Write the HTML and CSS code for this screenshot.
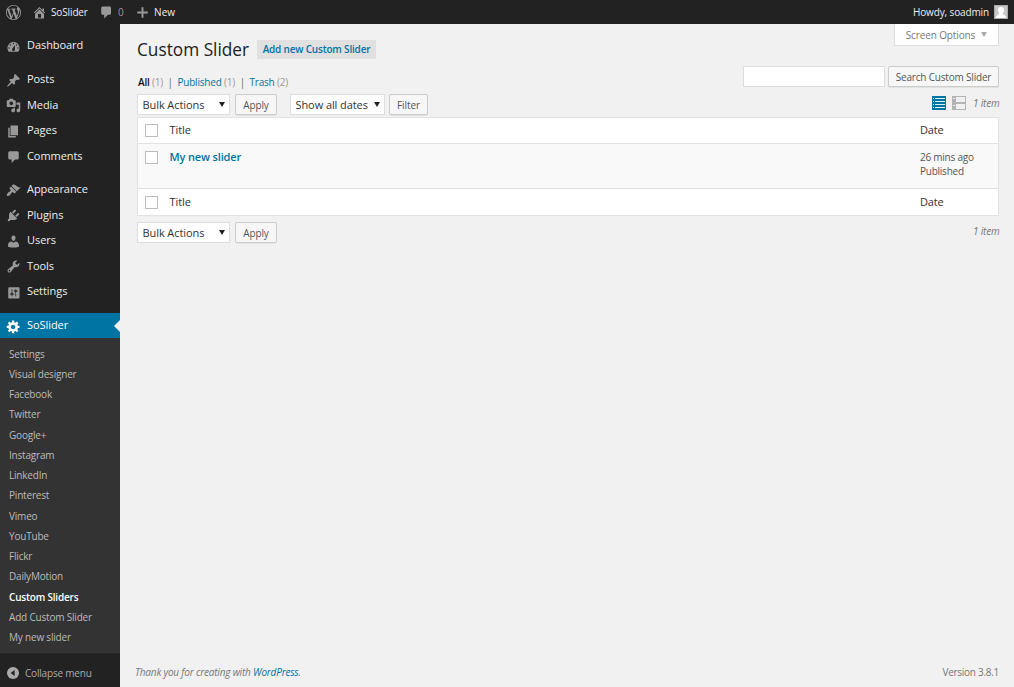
FILE: index.html
```html
<!DOCTYPE html>
<html lang="en">
<head>
<meta charset="utf-8">
<title>Custom Slider</title>
<link rel="stylesheet" href="styles.css">
</head>
<body>
<header class="adminbar">
  <svg class="icon wp-logo" viewBox="0 0 20 20"><path d="M20 10c0-5.51-4.49-10-10-10C4.48 0 0 4.49 0 10c0 5.52 4.48 10 10 10 5.51 0 10-4.48 10-10zM7.78 15.37L4.37 6.22c.55-.02 1.17-.08 1.17-.08.5-.06.44-1.13-.06-1.11 0 0-1.45.11-2.37.11-.18 0-.37 0-.58-.01C4.12 2.69 6.87 1.11 10 1.11c2.33 0 4.45.87 6.05 2.34-.68-.11-1.65.39-1.65 1.58 0 .74.45 1.36.9 2.1.35.61.55 1.36.55 2.46 0 1.49-1.4 5-1.4 5l-3.03-8.37c.54-.02.82-.17.82-.17.5-.05.44-1.25-.06-1.22 0 0-1.44.12-2.38.12-.87 0-2.33-.12-2.33-.12-.5-.03-.56 1.2-.06 1.22l.92.08 1.26 3.41zM17.41 10c.24-.64.74-1.87.43-4.25.7 1.29 1.05 2.71 1.05 4.25 0 3.29-1.73 6.24-4.4 7.78.97-2.59 1.94-5.2 2.92-7.78zM6.1 18.09C3.12 16.65 1.11 13.53 1.11 10c0-1.3.23-2.48.72-3.59C3.25 10.3 4.67 14.2 6.1 18.09zm4.03-6.63l2.58 6.98c-.86.29-1.76.45-2.71.45-.79 0-1.57-.11-2.29-.33.81-2.38 1.62-4.74 2.42-7.1z"/></svg>
  <a class="bar-item bar-site"><svg class="icon" viewBox="0 0 20 20"><path fill-rule="evenodd" d="M16 8.5l1.53 1.53-1.06 1.06L10 4.6l-6.47 6.49-1.06-1.06L10 2.5l4 4v-2h2v4zm-6-2.46l6 5.99V18H4v-5.97zM12 17v-5H8v5h4z"/></svg><span>SoSlider</span></a>
  <a class="bar-item bar-comments"><svg class="icon" viewBox="0 0 20 20"><path d="M5 2h9c1.1 0 2 .9 2 2v7c0 1.1-.9 2-2 2h-2l-5 5v-5H5c-1.1 0-2-.9-2-2V4c0-1.1.9-2 2-2z"/></svg><span>0</span></a>
  <a class="bar-item bar-new"><svg class="icon" viewBox="0 0 20 20"><path d="M17 8.700v2.600h-5.700V17H8.700v-5.700H3V8.700h5.700V3h2.600v5.700z"/></svg><span>New</span></a>
  <a class="bar-user"><span>Howdy, soadmin</span>
    <svg class="avatar" viewBox="0 0 14 14"><rect width="14" height="14" fill="#c8c8c8"/><path fill="#fff" d="M7 2c1.800 0 3 1.300 3 3.100 0 1.400-.6 2.700-1.400 3.300.3 1.300 3.400 1.200 3.700 4.600H1.700c.3-3.400 3.400-3.300 3.700-4.600C4.600 7.800 4 6.500 4 5.100 4 3.300 5.200 2 7 2z"/><rect x=".5" y=".5" width="13" height="13" fill="none" stroke="#aaa"/></svg>
  </a>
</header>
<div class="shell">
  <nav class="sidebar">
    <ul class="menu">
      <li class="menu-item"><svg class="icon" viewBox="0 0 20 20"><path fill-rule="evenodd" d="M3.760 17h12.480c1.100-1.370 1.760-3.110 1.760-5 0-4.420-3.580-8-8-8s-8 3.580-8 8c0 1.890.66 3.630 1.760 5zM10 5c.55 0 1 .45 1 1s-.45 1-1 1-1-.45-1-1 .45-1 1-1zM6 7c.55 0 1 .45 1 1s-.45 1-1 1-1-.45-1-1 .45-1 1-1zm8 0c.55 0 1 .45 1 1s-.45 1-1 1-1-.45-1-1 .45-1 1-1zm-5.370 5.550L12 8v6c0 1.100-.9 2-2 2s-2-.9-2-2c0-.57.24-1.080.63-1.450zM4 11c.55 0 1 .45 1 1s-.45 1-1 1-1-.45-1-1 .45-1 1-1zm12 0c.55 0 1 .45 1 1s-.45 1-1 1-1-.45-1-1 .45-1 1-1z"/></svg><span>Dashboard</span></li>
      <li class="menu-item group"><svg class="icon" viewBox="0 0 20 20"><path d="M10.440 3.020l1.820-1.820 6.360 6.350-1.830 1.820c-1.050-.68-2.480-.57-3.410.36l-.75.75c-.92.93-1.040 2.350-.35 3.410l-1.830 1.820-2.410-2.410-2.800 2.790c-.42.42-3.380 2.710-3.800 2.290s1.860-3.390 2.280-3.810l2.790-2.790L4.100 9.360l1.830-1.820c1.050.69 2.480.57 3.400-.36l.75-.75c.93-.92 1.050-2.350.36-3.410z"/></svg><span>Posts</span></li>
      <li class="menu-item"><svg class="icon" viewBox="0 0 20 20"><path fill-rule="evenodd" d="M13 11V4c0-.55-.45-1-1-1h-1.670L9 1H5L3.670 3H2c-.55 0-1 .45-1 1v7c0 .55.45 1 1 1h10c.55 0 1-.45 1-1zM7 4.500c1.380 0 2.500 1.120 2.500 2.500S8.380 9.500 7 9.500 4.500 8.380 4.500 7 5.620 4.500 7 4.500zM14 6h5v10.500c0 1.380-1.120 2.500-2.500 2.500S14 17.880 14 16.500s1.120-2.500 2.500-2.500c.17 0 .34.02.5.05V9h-3V6zm-4 8.050V13h2v3.500c0 1.380-1.120 2.500-2.500 2.500S7 17.880 7 16.500 8.120 14 9.500 14c.17 0 .34.02.5.05z"/></svg><span>Media</span></li>
      <li class="menu-item"><svg class="icon" viewBox="0 0 20 20"><path d="M6 15V2h10v13H6zm-1 1h8v2H3V5h2v11z"/></svg><span>Pages</span></li>
      <li class="menu-item"><svg class="icon" viewBox="0 0 20 20"><path d="M5 3h10c1.100 0 2 .9 2 2v7c0 1.100-.9 2-2 2h-3l-4.500 4.500V14H5c-1.100 0-2-.9-2-2V5c0-1.100.9-2 2-2z"/></svg><span>Comments</span></li>
      <li class="menu-item group"><svg class="icon" viewBox="0 0 20 20"><path d="M14.480 11.060L7.410 3.990l1.500-1.500c.5-.56 2.300-.47 3.510.32 1.210.8 1.430 1.280 2.910 2.100 1.180.64 2.450 1.260 4.450.85zm-.71.71L6.700 4.700 4.930 6.470c-.39.39-.39 1.020 0 1.410l1.060 1.060c.39.39.39 1.030 0 1.420-.6.6-1.430 1.110-2.210 1.690-.35.26-.7.53-1.010.84C1.430 14.230.4 16.080 1.400 17.070c.99 1 2.840-.03 4.180-1.360.31-.31.58-.66.85-1.020.57-.78 1.080-1.610 1.690-2.210.39-.39 1.020-.39 1.410 0l1.060 1.060c.39.39 1.020.39 1.410 0z"/></svg><span>Appearance</span></li>
      <li class="menu-item"><svg class="icon" viewBox="0 0 20 20"><path d="M13.110 4.360L9.870 7.600 8 5.730l3.240-3.240c.35-.34 1.050-.2 1.560.32.52.51.66 1.210.31 1.550zm-8 1.770l.91-1.120 9.010 9.010-1.190.84c-.71.71-2.630 1.160-3.820 1.160H6.140L4.900 17.260c-.59.59-1.540.59-2.120 0-.59-.58-.59-1.530 0-2.120l1.240-1.240v-3.880c0-1.130.4-3.190 1.090-3.890zm7.260 3.970l3.240-3.240c.34-.35 1.040-.21 1.550.31.52.51.66 1.210.31 1.550l-3.240 3.250z"/></svg><span>Plugins</span></li>
      <li class="menu-item"><svg class="icon" viewBox="0 0 20 20"><path d="M10 9.250c-2.270 0-2.730-3.440-2.730-3.440C7 4.020 7.820 2 9.970 2c2.160 0 2.980 2.020 2.710 3.810 0 0-.41 3.440-2.680 3.440zm0 2.570L12.720 10c2.390 0 4.520 2.330 4.520 4.530v2.490s-3.650 1.130-7.240 1.130c-3.650 0-7.240-1.130-7.240-1.130v-2.490c0-2.250 1.940-4.480 4.470-4.480z"/></svg><span>Users</span></li>
      <li class="menu-item"><svg class="icon" viewBox="0 0 20 20"><path fill-rule="evenodd" d="M16.680 9.770c-1.340 1.340-3.300 1.670-4.950.99l-5.410 6.520c-.99.99-2.590.99-3.580 0s-.99-2.590 0-3.570l6.520-5.420c-.68-1.650-.35-3.610.99-4.950 1.280-1.280 3.120-1.620 4.720-1.060l-2.890 2.890 2.820 2.820 2.860-2.870c.53 1.580.18 3.390-1.080 4.650zM3.810 16.210c.4.39 1.040.39 1.430 0 .4-.4.4-1.040 0-1.430-.39-.4-1.030-.4-1.430 0-.39.39-.39 1.030 0 1.430z"/></svg><span>Tools</span></li>
      <li class="menu-item"><svg class="icon" viewBox="0 0 20 20"><path fill-rule="evenodd" d="M18 17V4c0-.55-.45-1-1-1H4c-.55 0-1 .45-1 1v13c0 .55.45 1 1 1h13c.55 0 1-.45 1-1zM8.500 11h1c.55 0 1 .45 1 1s-.45 1-1 1h-1v2h-1v-2h-1c-.55 0-1-.45-1-1s.45-1 1-1h1V5.500h1zm5-2v6h-1V9h-1c-.55 0-1-.45-1-1s.45-1 1-1h1V5.500h1V7h1c.55 0 1 .45 1 1s-.45 1-1 1z"/></svg><span>Settings</span></li>
      <li class="menu-item group current"><svg class="icon" viewBox="0 0 20 20"><path fill-rule="evenodd" d="M18 12h-2.180c-.17.7-.44 1.350-.81 1.930l1.540 1.540-2.100 2.100-1.540-1.540c-.58.36-1.230.63-1.910.79V19H8v-2.180c-.68-.16-1.330-.43-1.910-.79l-1.540 1.540-2.120-2.120 1.540-1.540c-.36-.58-.63-1.230-.79-1.910H1V9.030h2.170c.16-.7.44-1.350.8-1.940L2.430 5.550l2.100-2.100 1.540 1.540c.58-.37 1.240-.64 1.930-.81V2h3v2.180c.68.16 1.330.43 1.910.79l1.540-1.540 2.120 2.120-1.540 1.540c.36.59.64 1.240.8 1.940H18V12zm-8.500 1.500c1.660 0 3-1.340 3-3s-1.340-3-3-3-3 1.340-3 3 1.340 3 3 3z"/></svg><span>SoSlider</span></li>
    </ul>
    <ul class="submenu">
      <li>Settings</li>
      <li>Visual designer</li>
      <li>Facebook</li>
      <li>Twitter</li>
      <li>Google+</li>
      <li>Instagram</li>
      <li>LinkedIn</li>
      <li>Pinterest</li>
      <li>Vimeo</li>
      <li>YouTube</li>
      <li>Flickr</li>
      <li>DailyMotion</li>
      <li class="active">Custom Sliders</li>
      <li>Add Custom Slider</li>
      <li>My new slider</li>
    </ul>
    <div class="collapse"><svg viewBox="0 0 12 12"><circle cx="6" cy="6" r="6" fill="#aaa"/><path d="M7.600 3v6L3.600 6z" fill="#222"/></svg><span>Collapse menu</span></div>
  </nav>
  <main class="content">
    <div class="title-row">
      <h1>Custom Slider</h1>
      <a class="add-new">Add new Custom Slider</a>
      <div class="screen-options">Screen Options<i class="caret"></i></div>
    </div>
    <div class="filter-row">
      <div class="views"><b>All</b> <em>(1)</em><i>|</i><a>Published</a> <em>(1)</em><i>|</i><a>Trash</a> <em>(2)</em></div>
      <div class="search"><input class="search-box" type="text" aria-label="Search"><button class="button search-button">Search Custom Slider</button></div>
    </div>
    <div class="tablenav">
      <div class="select bulk">Bulk Actions<i class="caret"></i></div>
      <button class="button apply">Apply</button>
      <div class="select dates">Show all dates<i class="caret"></i></div>
      <button class="button filter">Filter</button>
      <div class="switch">
        <svg viewBox="0 0 14 14" width="14" height="14"><path fill="#0074a2" d="M0 0h14v14H0z"/><path fill="#e4eff5" d="M1 2h1v1H1zM3 2h10v1H3zM1 5h1v1H1zM3 5h10v1H3zM1 8h1v1H1zM3 8h10v1H3zM1 11h1v1H1zM3 11h10v1H3z"/></svg>
        <svg viewBox="0 0 14 14" width="14" height="14"><path fill="#b4b4b4" d="M0 0h14v14H0z"/><path fill="#f1f1f1" d="M1 2h2v1H1zM4 1h9v5H4zM1 9h2v1H1zM4 8h9v5H4z"/></svg>
      </div>
      <span class="count">1 item</span>
    </div>
    <div class="table">
      <div class="tr head"><i class="check"></i><span class="cell-title">Title</span><span class="cell-date">Date</span></div>
      <div class="tr row"><i class="check"></i><a class="cell-title">My new slider</a><span class="cell-date">26 mins ago<br>Published</span></div>
      <div class="tr foot"><i class="check"></i><span class="cell-title">Title</span><span class="cell-date">Date</span></div>
    </div>
    <div class="tablenav bottom">
      <div class="select bulk">Bulk Actions<i class="caret"></i></div>
      <button class="button apply">Apply</button>
      <span class="count">1 item</span>
    </div>
    <footer class="footer"><span class="thanks">Thank you for creating with <a>WordPress</a>.</span><span class="version">Version 3.8.1</span></footer>
  </main>
</div>
</body>
</html>
```
FILE: styles.css
```css
* { box-sizing: border-box; }
html, body { height: 100%; }
body {
  margin: 0;
  display: flex;
  flex-direction: column;
  overflow: hidden;
  background: #f1f1f1;
  color: #333;
  font: 10px/14px "Open Sans", "Noto Sans", sans-serif;
  letter-spacing: -.19px;
  white-space: nowrap;
}
ul { list-style: none; margin: 0; padding: 0; }
a { color: #0074a2; }
.icon { width: 15px; height: 15px; fill: #999; flex: none; }

/* Toolbar */
.adminbar {
  display: flex;
  align-items: center;
  flex: none;
  height: 24px;
  padding: 0 6px;
  background: #222;
  color: #eee;
  letter-spacing: -.13px;
}
.bar-item { display: flex; align-items: center; color: #eee; }
.bar-site { margin-left: 11px; gap: 4px; }
.bar-site span { width: 48px; }
.bar-comments { gap: 4px; }
.bar-comments span { width: 17px; color: #999; }
.bar-new { gap: 4px; letter-spacing: .1px; }
.bar-user { display: flex; align-items: center; gap: 5px; margin-left: auto; color: #eee; }
.avatar { width: 14px; height: 14px; }

.shell { display: flex; flex: 1; min-height: 0; }

/* Side menu */
.sidebar { width: 120px; flex: none; background: #222; padding-top: 9px; }
.menu-item {
  display: flex;
  align-items: center;
  height: 25.5px;
  padding-left: 6px;
  gap: 6px;
  color: #eee;
  font-size: 11px;
  letter-spacing: -.06px;
}
.menu-item span { padding-bottom: .6px; }
.menu-item .icon { margin-top: 1px; }
.menu-item.group { margin-top: 8.25px; }
.menu-item.current { position: relative; background: #0074a2; color: #fff; }
.menu-item.current .icon { fill: #fff; }
.menu-item.current::after {
  content: "";
  position: absolute;
  right: 0;
  top: 7px;
  border: 6px solid transparent;
  border-left-width: 0;
  border-right-color: #f1f1f1;
}
.submenu { background: #333; padding: 5.25px 9px 5.5px; color: #bbb; }
.submenu li { height: 20.25px; line-height: 20.5px; }
.submenu .active { color: #fff; font-weight: 600; }
.collapse { display: flex; align-items: center; gap: 6px; height: 41px; padding-left: 7px; color: #aaa; }
.collapse svg { width: 12px; height: 12px; }

/* Content */
.content {
  display: flex;
  flex-direction: column;
  flex: 1;
  padding: 0 15px 0 17px;
}
.title-row { display: flex; align-items: flex-start; height: 42px; }
h1 { width: 112px; margin: 14px 8px 0 0; font-size: 17.25px; line-height: 24px; font-weight: 400; letter-spacing: 0; color: #222; }
.add-new {
  width: 119px;
  height: 19px;
  margin-top: 16px;
  background: #e0e0e0;
  font-weight: 600;
  line-height: 19px;
  text-align: center;
}
.screen-options {
  display: flex;
  align-items: center;
  justify-content: center;
  gap: 6px;
  width: 105px;
  height: 22px;
  margin-left: auto;
  border: 1px solid #ddd;
  border-top: 0;
  background: #fff;
  color: #777;
  letter-spacing: -.12px;
}
.caret { border: 3px solid transparent; border-top: 5px solid #222; border-bottom: 0; }
.screen-options .caret { border-top-color: #aaa; }

.filter-row { display: flex; justify-content: space-between; height: 28px; }
.views { padding: 9px 0 0 1px; color: #999; }
.views b { color: #111; font-weight: 600; }
.views em { font-style: normal; }
.views i { margin: 0 4.5px; font-style: normal; color: #666; }
.search { display: flex; gap: 3px; height: 21px; }
.search-box { width: 142px; margin: 0; padding: 0 4px; border: 1px solid #ddd; background: #fff; font: inherit; }
.button {
  height: 21px;
  padding: 0 7px;
  border: 1px solid #ccc;
  border-radius: 2px;
  background: #f7f7f7;
  box-shadow: 0 1px 0 rgba(0, 0, 0, .06);
  color: #555;
  font: 10px/18px "Open Sans", "Noto Sans", sans-serif;
  letter-spacing: -.1px;
}
.search-button { width: 111px; padding: 0; letter-spacing: -.19px; }

.tablenav { display: flex; height: 23px; }
.select {
  display: flex;
  align-items: center;
  justify-content: space-between;
  height: 21px;
  padding: 0 4px 0 4.5px;
  border: 1px solid #ddd;
  background: #fff;
  font-size: 11px;
  letter-spacing: -.08px;
}
.bulk { width: 93px; }
.dates { width: 95px; }
.apply { width: 42px; margin: 0 13px 0 5px; }
.filter { width: 39px; margin-left: 4px; padding: 0; }
.switch { display: flex; gap: 6px; margin: 2px 7px 0 auto; }
.count { width: 26px; padding-top: 2px; font-style: italic; color: #777; }

.table { border: 1px solid #e2e2e2; background: #fff; }
.tr { display: flex; }
.head { height: 25px; padding-top: 5px; }
.row { height: 46px; padding-top: 6px; border: solid #e2e2e2; border-width: 1px 0; background: #f9f9f9; }
.foot { height: 26px; padding-top: 6px; }
.foot span { margin-top: -.5px; }
.check { width: 13px; height: 13px; margin: 1px 11.5px 0 7px; border: 1px solid #bbb; background: #fff; }
.cell-title { flex: 1; font-size: 11px; letter-spacing: -.08px; }
.row .cell-title { font-weight: 600; letter-spacing: -.14px; }
.cell-date { width: 78px; font-size: 11px; }
.row .cell-date { font-size: 10px; letter-spacing: -.24px; color: #555; }
.bottom { margin-top: 6px; }
.bottom .count { margin-left: auto; }

.footer { display: flex; justify-content: space-between; margin: auto 0 8px -2px; color: #777; }
.thanks { font-style: italic; }
.version { letter-spacing: -.28px; }
```
